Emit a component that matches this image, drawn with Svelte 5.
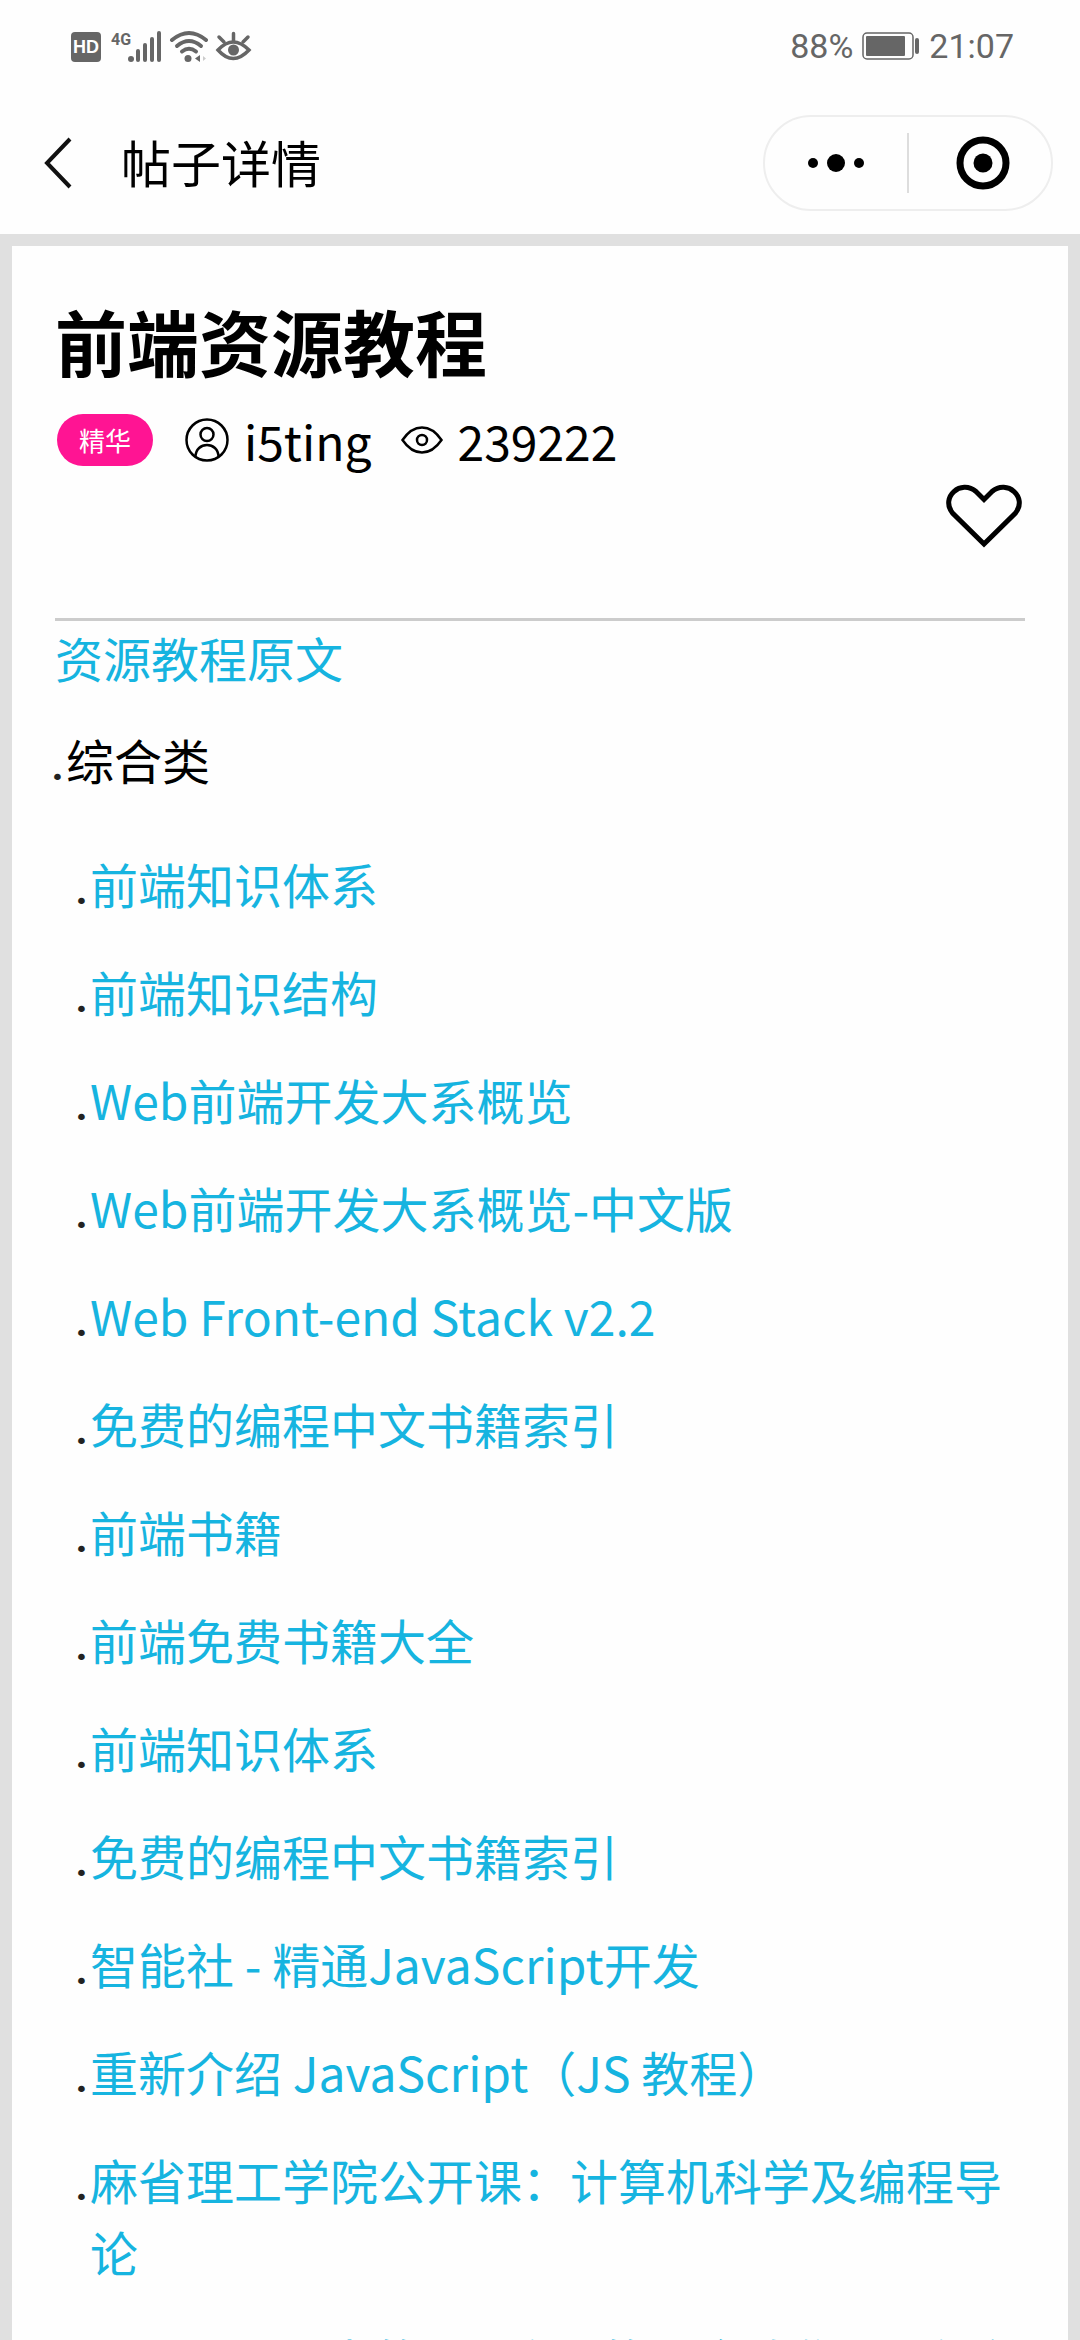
<script>
  const articles = [
    '前端知识体系',
    '前端知识结构',
    'Web前端开发大系概览',
    'Web前端开发大系概览-中文版',
    'Web Front-end Stack v2.2',
    '免费的编程中文书籍索引',
    '前端书籍',
    '前端免费书籍大全',
    '前端知识体系',
    '免费的编程中文书籍索引',
    '智能社 - 精通JavaScript开发',
    '重新介绍 JavaScript（JS 教程）',
    '麻省理工学院公开课：计算机科学及编程导论',
    'JavaScript中的this陷阱的最全收集--没有之一'
  ];
</script>

<div class="screen">
  <div class="status">
    <div class="group">
      <svg width="190" height="36" viewBox="0 0 190 36" fill="none" stroke="#666" stroke-linecap="round" aria-hidden="true">
        <rect x="1" y="4" width="30" height="30" rx="4" fill="#666" stroke="none" />
        <text x="16" y="25" text-anchor="middle" class="hd">HD</text>
        <text x="41" y="17" class="net">4G</text>
        <g fill="#666" stroke="none">
          <circle cx="61" cy="31" r="3" />
          <rect x="66" y="21" width="4" height="13" rx="2" />
          <rect x="73" y="15" width="4" height="19" rx="2" />
          <rect x="80" y="9" width="4" height="25" rx="2" />
          <rect x="87" y="3" width="4" height="31" rx="2" />
        </g>
        <path d="M102 12Q119 -2 136 12" stroke-width="4" />
        <path d="M107 18Q119 8 131 18M112 23.500Q119 18 126 23.500" stroke-width="4" />
        <circle cx="118" cy="30.500" r="3.500" fill="#666" stroke="none" />
        <path d="M130 27V34L125 30.500Z" fill="#666" stroke="none" />
        <path d="M133 28V33L136 30.500Z" fill="#ccc" stroke="none" />
        <path d="M148 22Q163 6 179 22Q163 39 148 22Z" stroke-width="3.500" />
        <circle cx="163.500" cy="22" r="5.500" fill="#666" stroke="none" />
        <path d="M163.500 13V5.500M154 14L149 9M173 14L178 9" stroke-width="3.500" />
      </svg>
    </div>
    <div class="group">
      <span>88%</span>
      <svg width="58" height="28" viewBox="0 0 58 28" aria-hidden="true">
        <rect x="1" y="1" width="50" height="26" rx="4" fill="none" stroke="#666" stroke-width="1.500" />
        <rect x="4" y="4" width="39" height="20" rx="1" fill="#666" />
        <rect x="53" y="6" width="4" height="16" rx="2" fill="#666" />
      </svg>
      <span>21:07</span>
    </div>
  </div>

  <header>
    <button class="back" aria-label="返回">
      <svg width="28" height="52" viewBox="0 0 28 52" fill="none" stroke="#111" stroke-width="4" aria-hidden="true">
        <path d="M26 2L3 26L26 50" />
      </svg>
    </button>
    <div class="title">帖子详情</div>
    <div class="capsule">
      <button aria-label="更多">
        <svg width="58" height="20" viewBox="0 0 58 20" aria-hidden="true">
          <circle cx="6" cy="10" r="5" /><circle cx="29" cy="10" r="9" /><circle cx="52" cy="10" r="5" />
        </svg>
      </button>
      <i></i>
      <button aria-label="关闭">
        <svg width="54" height="54" viewBox="0 0 54 54" aria-hidden="true">
          <circle cx="27" cy="27" r="23" fill="none" stroke="#000" stroke-width="7" />
          <circle cx="27" cy="27" r="9.500" />
        </svg>
      </button>
    </div>
  </header>

  <main>
    <h1>前端资源教程</h1>
    <div class="meta">
      <span class="badge">精华</span>
      <svg class="user" width="44" height="44" viewBox="0 0 44 44" fill="none" stroke="#000" stroke-width="2.500" aria-hidden="true">
        <circle cx="22" cy="22" r="20.500" />
        <circle cx="22" cy="16.500" r="6.500" />
        <path d="M10.500 39C10.500 23 33.500 23 33.500 39" />
      </svg>
      <span class="author">i5ting</span>
      <svg class="views" width="42" height="28" viewBox="0 0 42 28" fill="none" stroke="#000" stroke-width="2.500" aria-hidden="true">
        <path d="M1.500 14Q10 1.500 21 1.500T40.500 14Q32 26.500 21 26.500T1.500 14Z" />
        <circle cx="21" cy="14" r="5" />
      </svg>
      <span>239222</span>
    </div>
    <button class="like" aria-label="收藏">
      <svg width="76" height="64" viewBox="0 0 76 64" fill="none" stroke="#000" stroke-width="5" aria-hidden="true">
        <path d="M38 15.500L30 7.500C15 -5 -6 13 6.500 29L38 60L69.500 29C82 13 61 -5 46 7.500Z" />
      </svg>
    </button>
    <hr />
    <a class="source" href="#source">资源教程原文</a>
    <ul>
      <li class="row">
        <span class="dot">.</span><span>综合类</span>
      </li>
    </ul>
    <ul class="articles">
      {#each articles as name, i}
        <li class="row">
          <span class="dot">.</span><a href="#article-{i}">{name}</a>
        </li>
      {/each}
    </ul>
  </main>
</div>

<style>
  :global(body) {
    margin: 0;
    background: #fefefe;
  }
  .screen {
    box-sizing: border-box;
    display: flex;
    flex-direction: column;
    height: 100vh;
    overflow: hidden;
    background: #fefefe;
    color: #000;
    font: 48px/72px "Noto Sans CJK SC", sans-serif;
  }
  button {
    display: flex;
    align-items: center;
    justify-content: center;
    padding: 0;
    border: 0;
    background: none;
  }
  svg {
    display: block;
    flex: none;
  }
  .status {
    flex: none;
    display: flex;
    align-items: center;
    justify-content: space-between;
    height: 92px;
    padding: 0 66px 0 70px;
    color: #666;
    font: 34px/40px Roboto, sans-serif;
  }
  .group {
    display: flex;
    align-items: center;
    gap: 9px;
  }
  .hd {
    fill: #fff;
    stroke: none;
    font: bold 18px "Liberation Sans", sans-serif;
  }
  .net {
    fill: #666;
    stroke: none;
    font: bold 16px Roboto, sans-serif;
  }
  header {
    flex: none;
    display: flex;
    align-items: center;
    height: 142px;
    padding: 0 27px 0 44px;
  }
  .title {
    flex: 1;
    margin-left: 49px;
    padding-bottom: 4px;
    font-size: 50px;
  }
  .capsule {
    display: grid;
    grid-template-columns: 1fr 2px 1fr;
    align-items: center;
    box-sizing: border-box;
    width: 290px;
    height: 96px;
    border: 2px solid #eee;
    border-radius: 48px;
  }
  .capsule button {
    height: 100%;
  }
  .capsule i {
    height: 60px;
    background: #ddd;
  }
  .capsule button:last-child {
    padding-left: 6px;
  }
  main {
    flex: 1;
    min-height: 0;
    padding: 50px 43px 0;
    border: 12px solid #e0e0e0;
    border-bottom: 0;
  }
  h1 {
    margin: 0 0 12px;
    font-size: 72px;
    line-height: 88px;
  }
  .meta {
    display: flex;
    align-items: center;
    height: 88px;
    padding-left: 2px;
  }
  .badge {
    padding: 0 22px;
    border-radius: 26px;
    background: #ff1493;
    color: #fff;
    font-size: 26px;
    line-height: 52px;
  }
  .user {
    margin: 0 15px 0 32px;
  }
  .views {
    margin: 0 15px 0 29px;
  }
  .like {
    margin: 0 3px 70px auto;
  }
  hr {
    height: 3px;
    margin: 0;
    border: 0;
    background: #ccc;
  }
  a {
    color: #16b4e0;
    text-decoration: none;
  }
  .source {
    display: block;
  }
  ul {
    margin: 30px 0 0;
    padding: 0;
    list-style: none;
  }
  .articles {
    padding-left: 24px;
    margin-top: 52px;
  }
  .row {
    display: flex;
    align-items: baseline;
    margin: 0 0 36px -4px;
  }
  .dot {
    width: 15px;
    flex: none;
    color: #222;
    font-family: Roboto, sans-serif;
    font-weight: 500;
    line-height: 48px;
  }
</style>
